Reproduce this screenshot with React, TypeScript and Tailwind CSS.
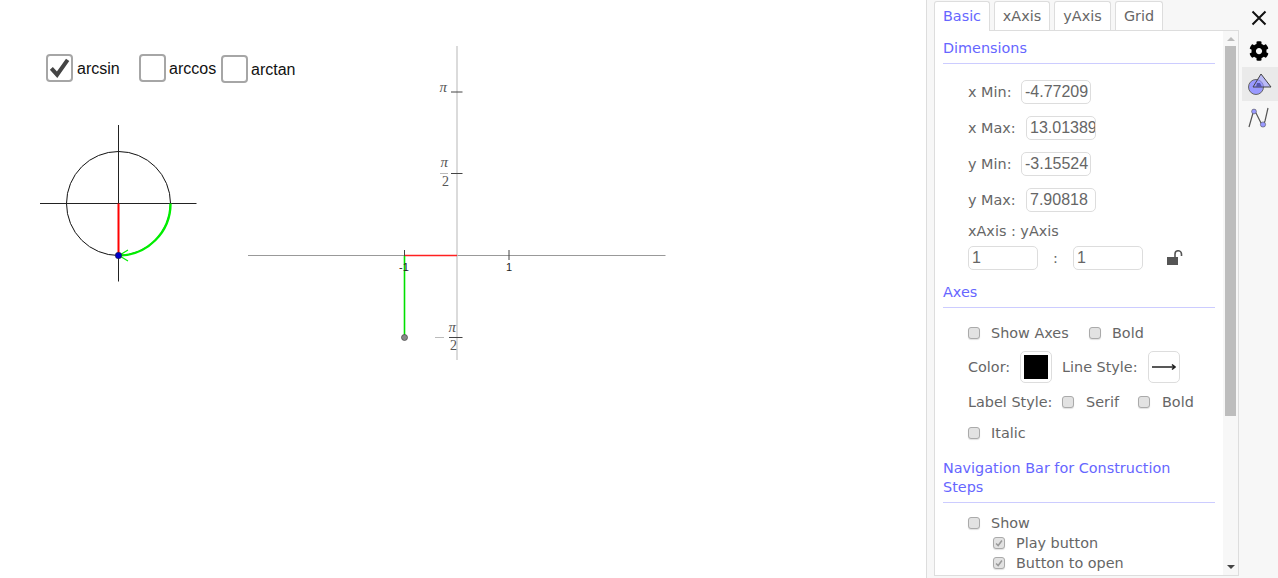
import { FaCog } from "react-icons/fa";

const LABEL = "text-[#666] text-[14.4px] leading-[20px]";
const HEAD = "text-[#6666ff] text-[14.4px] leading-[19px]";

function Box({ checked = false, className = "" }: { checked?: boolean; className?: string }) {
  return (
    <span className={`flex h-[12px] w-[12px] shrink-0 items-center justify-center rounded-[3px] border border-[#aaa] bg-[#e2e2e2] shadow-[0_1px_1px_rgba(0,0,0,0.12)] ${className}`}>
      {checked && (
        <svg viewBox="0 0 12 12" className="h-[10px] w-[10px]">
          <path d="M2.5 6.5 L5 9 L9.5 3" fill="none" stroke="#999" strokeWidth="1.8" />
        </svg>
      )}
    </span>
  );
}

function Field({ value, className = "" }: { value: string; className?: string }) {
  return (
    <div className={`h-[24px] w-[70px] overflow-hidden rounded-[5px] border border-[#ddd] bg-white pl-[3px] font-['Liberation_Sans',sans-serif] text-[16px] leading-[22px] whitespace-nowrap text-[#666] ${className}`}>
      {value}
    </div>
  );
}

function DimRow({ label, value, gap }: { label: string; value: string; gap: string }) {
  return (
    <div className={`mb-[12px] flex h-[24px] items-center pl-[25px] ${LABEL}`}>
      <span className={gap}>{label}</span>
      <Field value={value} />
    </div>
  );
}

function GeoCheck({ left, top, checked = false }: { left: string; top: string; checked?: boolean }) {
  return (
    <div className={`absolute ${left} ${top} flex h-[28px] w-[27px] items-center justify-center rounded-[4px] border-2 border-[#a6a6a6] bg-white`}>
      {checked && (
        <svg viewBox="0 0 24 24" className="h-[24px] w-[24px]">
          <path d="M3.5 12.5 L9.5 19 L20.5 3.5" fill="none" stroke="#444" strokeWidth="4.2" />
        </svg>
      )}
    </div>
  );
}

function Graphics() {
  const tick = "#444";
  return (
    <svg width="926" height="578" className="absolute top-0 left-0">
      {/* unit circle */}
      <circle cx="118.5" cy="203.5" r="52" fill="none" stroke="#111" strokeWidth="1" />
      <path d="M40 203.5 H196.5 M118.5 125 V281.5" stroke="#222" strokeWidth="1" />
      <path d="M118.5 203.5 V255.5" stroke="#ff0000" strokeWidth="2" />
      <path d="M170.5 203.5 A52 52 0 0 1 118.5 255.5" fill="none" stroke="#00ee00" strokeWidth="2.4" />
      <path d="M128 250 L119 255.5 L128 261" fill="none" stroke="#00ee00" strokeWidth="1.2" />
      <circle cx="118.5" cy="255.5" r="3.2" fill="#0000cc" stroke="#223" strokeWidth="0.6" />

      {/* graph axes */}
      <path d="M248 255.5 H665.5" stroke="#999" strokeWidth="1" />
      <path d="M457 46 V360" stroke="#ccc" strokeWidth="1.4" />
      <path d="M404.5 250 V257 M509 250 V260" stroke={tick} strokeWidth="1" />
      <path d="M451 92 H462.5 M451 173.5 H462.5 M449 337.5 H462.5" stroke={tick} strokeWidth="1" />
      <path d="M405 255.5 H457" stroke="#ff2020" strokeWidth="1.6" />
      <path d="M404.5 256 V337" stroke="#00e000" strokeWidth="1.6" />
      <circle cx="404.5" cy="337.5" r="3" fill="#888" stroke="#444" strokeWidth="0.7" />

      <text x="399" y="271" fontSize="11" fontFamily="Liberation Sans, sans-serif" fill="#222">-1</text>
      <text x="506" y="271" fontSize="11" fontFamily="Liberation Sans, sans-serif" fill="#222">1</text>

      <g fontFamily="Liberation Serif, serif" fill="#555">
        <text x="439.5" y="92" fontSize="15" fontStyle="italic">π</text>
        <text x="440.5" y="167" fontSize="15" fontStyle="italic">π</text>
        <path d="M440 173.5 H448" stroke="#bbb" strokeWidth="1" />
        <text x="442" y="186" fontSize="14">2</text>
        <path d="M435 337.5 H444" stroke="#bbb" strokeWidth="1" />
        <text x="448.5" y="332" fontSize="15" fontStyle="italic">π</text>
        <text x="450" y="350" fontSize="14">2</text>
      </g>
    </svg>
  );
}

function ToolIcons() {
  return (
    <div className="flex w-[39px] shrink-0 flex-col items-end">
      <svg viewBox="0 0 16 16" className="mt-[10px] mr-[11px] h-[16px] w-[16px]">
        <path d="M1.5 1.5 L14.5 14.5 M14.5 1.5 L1.5 14.5" stroke="#111" strokeWidth="2" />
      </svg>
      <FaCog className="mt-[15px] mr-[9px] h-[20px] w-[20px] text-black" />
      <div className="mt-[6px] flex h-[34px] w-[36px] items-center justify-center bg-[#eaeaea]">
        <svg viewBox="0 0 28 26" className="h-[26px] w-[28px]">
          <circle cx="10" cy="16" r="7.5" fill="#9999ff" stroke="#666" strokeWidth="1" />
          <path d="M15 3 L25 16 H7 Z" fill="#9999ff" fillOpacity="0.6" stroke="#444" strokeWidth="1" />
          <path d="M10 16 H16 L14 12 L11 12 Z" fill="#5555aa" />
        </svg>
      </div>
      <svg viewBox="0 0 24 24" className="mt-[5px] mr-[8px] h-[24px] w-[24px]">
        <path d="M3 21 L7 7 Q8 4 10 7 L15 17 Q17 21 19 15 L22 2" fill="none" stroke="#555" strokeWidth="1.2" />
        <circle cx="8" cy="5.5" r="2.4" fill="#9999ff" stroke="#555" strokeWidth="0.6" />
        <circle cx="17" cy="18.5" r="2.6" fill="#9999ff" stroke="#555" strokeWidth="0.6" />
      </svg>
    </div>
  );
}

export default function App() {
  return (
    <div className="flex h-[578px] w-[1278px] overflow-hidden bg-white font-['DejaVu_Sans',sans-serif]">
      {/* GeoGebra canvas */}
      <div className="relative w-[926px] shrink-0 font-['Liberation_Sans',sans-serif] text-[16px] text-[#111]">
        <Graphics />
        <GeoCheck left="left-[46px]" top="top-[54px]" checked />
        <span className="absolute top-[57px] left-[77px]">arcsin</span>
        <GeoCheck left="left-[139px]" top="top-[54px]" />
        <span className="absolute top-[57px] left-[169px]">arccos</span>
        <GeoCheck left="left-[221px]" top="top-[55px]" />
        <span className="absolute top-[58px] left-[251px]">arctan</span>
      </div>

      {/* Properties panel */}
      <div className="flex min-w-0 flex-1 border-l border-[#ddd] bg-[#f7f7f7] pl-[7px]">
        <div className="flex h-[576px] w-[305px] shrink-0 flex-col">
          <div className="flex h-[31px] shrink-0 gap-[4px] pt-[1px] text-[14.4px] leading-[28px]">
            <div className="z-10 h-[30px] w-[56px] rounded-t-[3px] border border-b-0 border-[#ddd] bg-white text-center text-[#6666ff]">Basic</div>
            <div className="h-[29px] w-[56px] rounded-t-[3px] border border-b-0 border-[#ddd] bg-white text-center text-[#666]">xAxis</div>
            <div className="h-[29px] w-[57px] rounded-t-[3px] border border-b-0 border-[#ddd] bg-white text-center text-[#666]">yAxis</div>
            <div className="h-[29px] w-[48px] rounded-t-[3px] border border-b-0 border-[#ddd] bg-white text-center text-[#666]">Grid</div>
          </div>
          <div className="-mt-px flex min-h-0 flex-1 border border-[#ddd] bg-white">
            <div className="w-[288px] shrink-0 overflow-hidden pt-[8px] pl-[8px]">
              <div className={`${HEAD} w-[272px] border-b border-[#ccf] pb-[5px]`}>Dimensions</div>
              <div className="h-[16px]" />
              <DimRow label="x Min:" value="-4.77209" gap="w-[53px]" />
              <DimRow label="x Max:" value="13.01389" gap="w-[58px]" />
              <DimRow label="y Min:" value="-3.15524" gap="w-[53px]" />
              <DimRow label="y Max:" value="7.90818" gap="w-[58px]" />
              <div className={`-mt-[3px] pl-[25px] ${LABEL}`}>xAxis : yAxis</div>
              <div className={`mt-[5px] flex h-[24px] items-center pl-[25px] ${LABEL}`}>
                <Field value="1" />
                <span className="w-[35px] text-center">:</span>
                <Field value="1" />
                <svg viewBox="0 0 16 16" className="ml-[24px] h-[16px] w-[16px]">
                  <rect x="0" y="7" width="11" height="8" fill="#555" />
                  <path d="M8 7 V4 A3.2 3.2 0 0 1 14.5 4 V6" fill="none" stroke="#555" strokeWidth="1.6" />
                </svg>
              </div>

              <div className={`${HEAD} mt-[13px] w-[272px] border-b border-[#ccf] pb-[5px]`}>Axes</div>
              <div className={`mt-[15px] flex h-[20px] items-center pl-[25px] ${LABEL}`}>
                <Box />
                <span className="ml-[11px] w-[86px]">Show Axes</span>
                <Box className="ml-[12px]" />
                <span className="ml-[11px]">Bold</span>
              </div>
              <div className={`mt-[8px] flex h-[32px] items-center pl-[25px] ${LABEL}`}>
                <span className="w-[52px]">Color:</span>
                <div className="flex h-[32px] w-[32px] items-center justify-center rounded-[5px] border border-[#ddd] bg-white">
                  <div className="h-[24px] w-[24px] bg-black" />
                </div>
                <span className="ml-[10px] w-[86px]">Line Style:</span>
                <div className="flex h-[32px] w-[32px] items-center justify-center rounded-[5px] border border-[#ddd] bg-white">
                  <svg viewBox="0 0 24 10" className="h-[10px] w-[24px]">
                    <path d="M0 5 H23 M20 2.5 L23 5 L20 7.5" fill="none" stroke="#222" strokeWidth="1.6" />
                  </svg>
                </div>
              </div>
              <div className={`mt-[9px] flex h-[20px] items-center pl-[25px] ${LABEL}`}>
                <span className="w-[94px]">Label Style:</span>
                <Box />
                <span className="ml-[12px] w-[40px]">Serif</span>
                <Box className="ml-[12px]" />
                <span className="ml-[12px]">Bold</span>
              </div>
              <div className={`mt-[11px] flex h-[20px] items-center pl-[25px] ${LABEL}`}>
                <Box />
                <span className="ml-[11px]">Italic</span>
              </div>

              <div className={`${HEAD} mt-[16px] w-[272px] border-b border-[#ccf] pb-[5px]`}>
                Navigation Bar for Construction <br />Steps
              </div>
              <div className={`mt-[10px] flex h-[20px] items-center pl-[25px] ${LABEL}`}>
                <Box />
                <span className="ml-[11px]">Show</span>
              </div>
              <div className={`flex h-[20px] items-center pl-[50px] ${LABEL}`}>
                <Box checked />
                <span className="ml-[11px]">Play button</span>
              </div>
              <div className={`flex h-[20px] items-center pl-[50px] ${LABEL}`}>
                <Box checked />
                <span className="ml-[11px]">Button to open</span>
              </div>
            </div>

            {/* scrollbar */}
            <div className="flex w-[15px] shrink-0 flex-col items-center bg-[#f7f7f7]">
              <div className="mt-[6px] h-0 w-0 border-x-[4px] border-b-[4px] border-x-transparent border-b-[#bbb]" />
              <div className="mt-[5px] h-[370px] w-[11px] bg-[#bdbdbd]" />
              <div className="mt-[149px] h-0 w-0 border-x-[4px] border-t-[4px] border-x-transparent border-t-[#444]" />
            </div>
          </div>
        </div>
        <ToolIcons />
      </div>
    </div>
  );
}
